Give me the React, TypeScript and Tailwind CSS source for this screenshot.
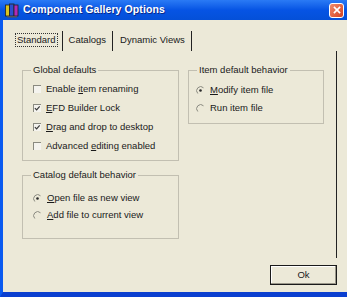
import React from 'react';

const font = { fontFamily: '"Liberation Sans", Arial, sans-serif' };

function CheckBox({ checked }: { checked?: boolean }) {
  return (
    <span className="relative inline-block h-[8px] w-[8px] shrink-0 border-l border-t border-[#8a8a80] bg-[#f4f3ee]">
      {checked && (
        <svg viewBox="0 0 8 8" className="absolute left-0 top-0 h-[7px] w-[7px]">
          <path d="M1 3.5 L3 5.5 L6.5 1.5" stroke="#3a3a3a" strokeWidth="1.4" fill="none" />
        </svg>
      )}
    </span>
  );
}

function Radio({ checked }: { checked?: boolean }) {
  return (
    <svg viewBox="0 0 9 9" className="h-[9px] w-[9px] shrink-0">
      <path d="M7.5 1.8 A4 4 0 1 0 1.8 7.5" stroke="#8a8a80" strokeWidth="1" fill="none" />
      {checked && <circle cx="4.5" cy="4.5" r="1.3" fill="#2a2a2a" />}
    </svg>
  );
}

function Group({
  title,
  className,
  children,
}: {
  title: string;
  className: string;
  children: React.ReactNode;
}) {
  return (
    <div className={`relative border border-[#c2bfb1] ${className}`}>
      <span className="absolute left-[8px] top-[-8px] bg-[#ece9d8] px-[2px] text-[9.5px] leading-[13px] text-[#1a1a1a]">
        {title}
      </span>
      {children}
    </div>
  );
}

function Row({ icon, children }: { icon: React.ReactNode; children: React.ReactNode }) {
  return (
    <div className="flex items-center gap-[5px] text-[9.5px] text-[#1a1a1a]">
      {icon}
      <span>{children}</span>
    </div>
  );
}

export default function App() {
  return (
    <div className="flex h-[297px] w-[347px] flex-col overflow-hidden" style={font}>
      {/* title bar */}
      <div className="flex h-[20px] items-center bg-gradient-to-b from-[#2a7af5] via-[#0654e4] to-[#0450d8] pl-[5px] pr-[3px]">
        <svg viewBox="0 0 14 15" className="h-[15px] w-[14px]">
          <rect x="0.5" y="2" width="4" height="11" fill="#d9c320" stroke="#222" strokeWidth="0.8" />
          <rect x="4.5" y="1" width="4.5" height="12" fill="#2b4fd0" stroke="#222" strokeWidth="0.8" />
          <rect x="9" y="2" width="4" height="11" fill="#b02cb8" stroke="#222" strokeWidth="0.8" />
          <rect x="2" y="13" width="10" height="1.5" fill="#555" />
        </svg>
        <span className="ml-[4px] text-[10.5px] font-bold tracking-[0.1px] text-white [text-shadow:1px_1px_0_#0a2a8a]">
          Component Gallery Options
        </span>
        <div className="ml-auto flex h-[15px] w-[15px] items-center justify-center rounded-[3px] border border-white bg-gradient-to-br from-[#ef8a6c] to-[#d4411e]">
          <svg viewBox="0 0 9 9" className="h-[8px] w-[8px]">
            <path d="M1 1 L8 8 M8 1 L1 8" stroke="white" strokeWidth="1.8" />
          </svg>
        </div>
      </div>

      {/* body */}
      <div className="flex flex-1 flex-col border-b-[5px] border-l-[3px] border-b-[#0b3fd0] border-l-[#0a5af0] bg-[#ece9d8]">
        {/* tabs */}
        <div className="ml-[12px] mt-[11px] flex h-[20px] items-start text-[9.5px] text-[#1a1a1a]">
          <div className="flex h-[20px] items-start">
            <span className="mt-[2px] border border-dotted border-[#333] px-[1px] leading-[12px]">Standard</span>
            <span className="ml-[4px] h-[20px] w-[1px] bg-[#222]" />
          </div>
          <div className="flex h-[20px] items-start">
            <span className="ml-[6px] mt-[3px] leading-[12px]">Catalogs</span>
            <span className="ml-[6px] h-[20px] w-[1px] bg-[#222]" />
          </div>
          <div className="flex h-[20px] items-start">
            <span className="ml-[7px] mt-[3px] leading-[12px]">Dynamic Views</span>
            <span className="ml-[6px] h-[20px] w-[1px] bg-[#222]" />
          </div>
        </div>

        {/* panel */}
        <div className="ml-[7px] mr-[10px] flex h-[207px] gap-[9px] border-r border-r-[#222] pl-[12px] pt-[19px]">
          <div className="flex w-[157px] flex-col gap-[14px]">
            <Group title="Global defaults" className="h-[91px] pl-[10px] pt-[11px]">
              <div className="flex flex-col gap-[6px]">
                <div className="h-[13px]">
                  <Row icon={<CheckBox />}>
                    Enable <span className="underline">it</span>em renaming
                  </Row>
                </div>
                <div className="h-[13px]">
                  <Row icon={<CheckBox checked />}>
                    <span className="underline">E</span>FD Builder Lock
                  </Row>
                </div>
                <div className="h-[13px]">
                  <Row icon={<CheckBox checked />}>
                    <span className="underline">D</span>rag and drop to desktop
                  </Row>
                </div>
                <div className="h-[13px]">
                  <Row icon={<CheckBox />}>
                    Advanced <span className="underline">e</span>diting enabled
                  </Row>
                </div>
              </div>
            </Group>
            <Group title="Catalog default behavior" className="h-[64px] pl-[10px] pt-[15px]">
              <div className="flex flex-col gap-[4px]">
                <div className="h-[13px]">
                  <Row icon={<Radio checked />}>
                    <span className="underline">O</span>pen file as new view
                  </Row>
                </div>
                <div className="h-[13px]">
                  <Row icon={<Radio />}>
                    <span className="underline">A</span>dd file to current view
                  </Row>
                </div>
              </div>
            </Group>
          </div>
          <Group title="Item default behavior" className="h-[54px] w-[136px] pl-[7px] pt-[12px]">
            <div className="flex flex-col gap-[5px]">
              <div className="h-[13px]">
                <Row icon={<Radio checked />}>
                  <span className="underline">M</span>odify item file
                </Row>
              </div>
              <div className="h-[13px]">
                <Row icon={<Radio />}>Run item file</Row>
              </div>
            </div>
          </Group>
        </div>

        {/* buttons */}
        <div className="mr-[10px] mt-[7px] flex justify-end">
          <button className="h-[20px] w-[67px] border border-[#1a1a1a] bg-[#ece9d8] text-[9.5px] text-[#1a1a1a] shadow-[inset_-1px_-1px_0_#9a978a,inset_1px_1px_0_#ffffff]">
            Ok
          </button>
        </div>
      </div>
    </div>
  );
}
